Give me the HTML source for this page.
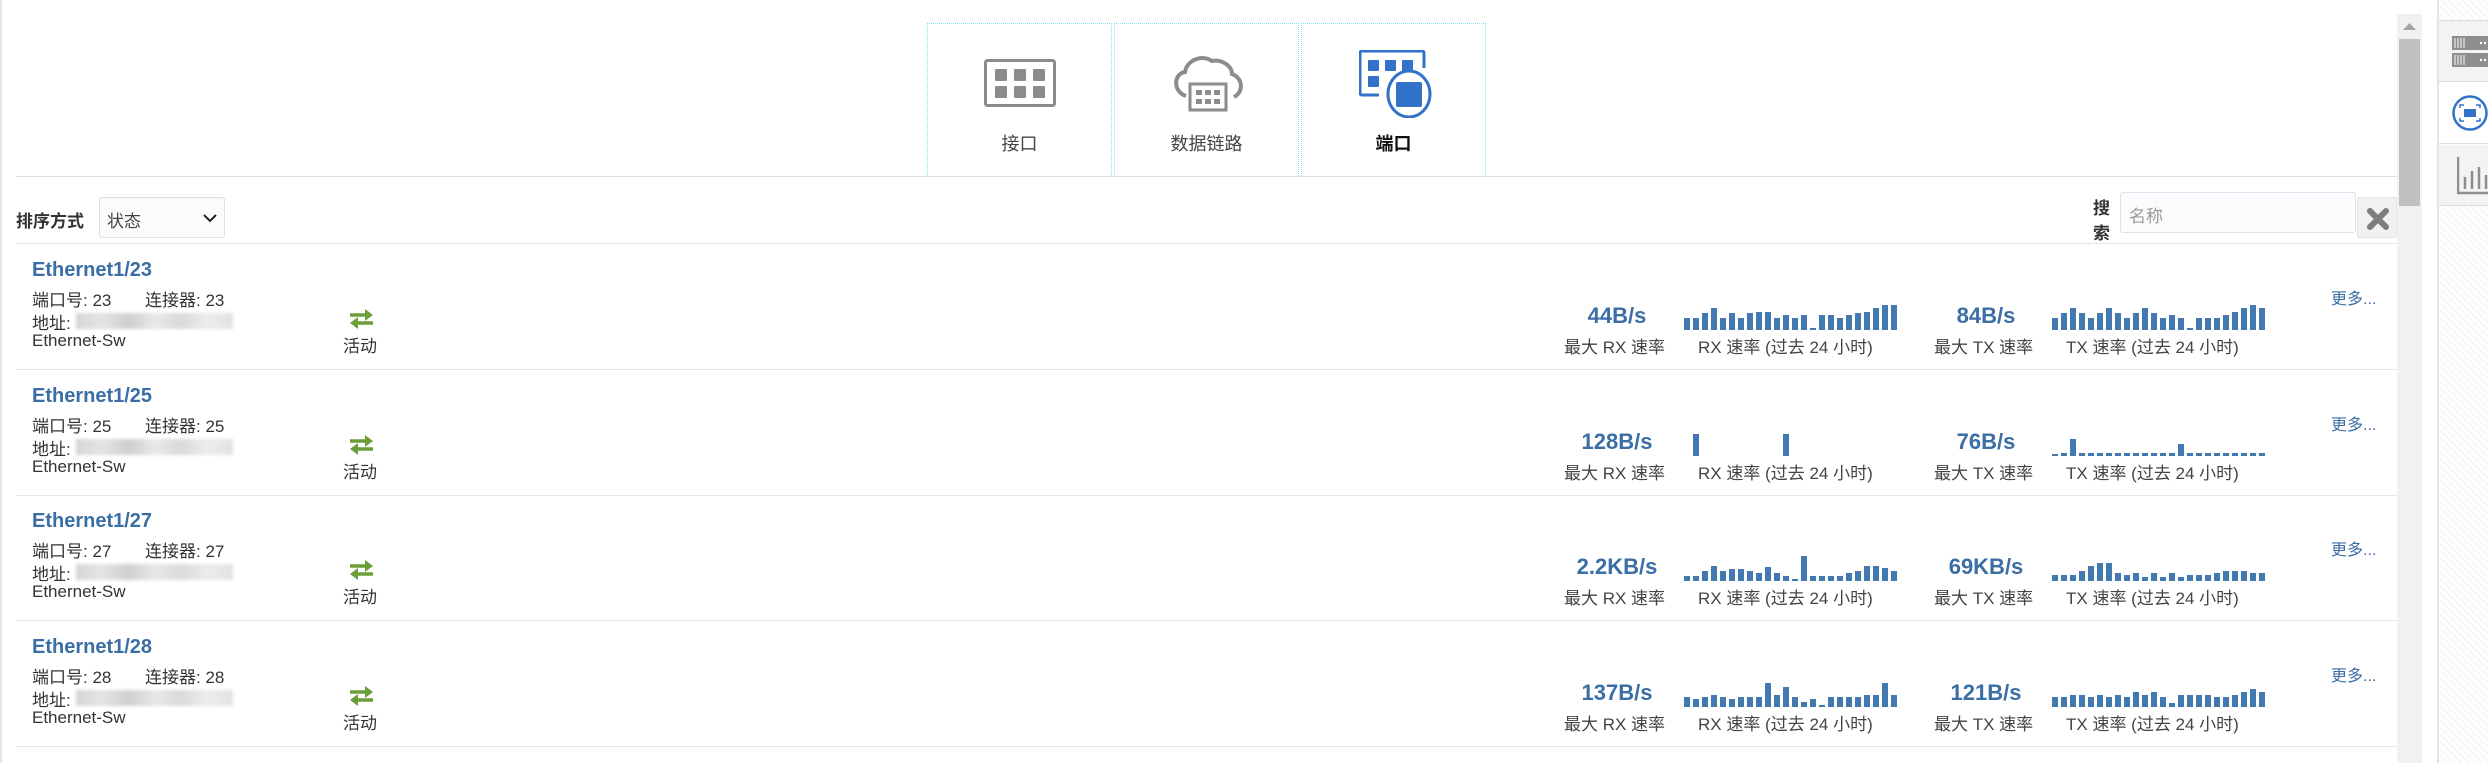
<!DOCTYPE html>
<html><head><meta charset="utf-8"><style>
*{margin:0;padding:0;box-sizing:border-box}
body{width:2488px;height:763px;overflow:hidden;background:#fff;font-family:"Liberation Sans","Noto Sans CJK SC",sans-serif;color:#333;position:relative}
.a{position:absolute;white-space:nowrap}
.tab{position:absolute;top:23px;height:153px;width:185px;border:1px dotted #7fe3ea;border-bottom:none}
.tl{position:absolute;left:0;right:0;top:106px;text-align:center;font-size:18px;color:#444}
.hl{position:absolute;height:1px;background:#e3e6ea}
.title{font-size:20px;font-weight:bold;color:#3a6ea5}
.d{font-size:17px;color:#333}
.val{font-size:22px;font-weight:bold;color:#3a6ea5;text-align:center;width:120px}
.lab{font-size:17px;color:#444}
.more{font-size:16px;color:#3a6ea5}
.blur{position:absolute;height:16px;background:linear-gradient(90deg,#d6d6d6,#e4e4e4,#cfcfcf,#e8e8e8,#dadada,#ececec,#e2e2e2);filter:blur(1.5px)}
.hatch{background:repeating-linear-gradient(45deg,#f7f7f7 0 2px,#fff 2px 5px)}
</style></head><body>
<div class="a" style="left:0;top:0;width:2px;height:763px;background:#dfe5ec"></div>

<!-- tabs -->
<div class="tab" style="left:927px">
 <svg class="a" style="left:56px;top:35px" width="72" height="48" viewBox="0 0 72 48"><rect x="1.5" y="1.5" width="69" height="45" rx="2" fill="none" stroke="#8a8c8e" stroke-width="3"/><g fill="#8a8c8e"><rect x="11" y="10" width="12" height="12" rx="1"/><rect x="30" y="10" width="12" height="12" rx="1"/><rect x="49" y="10" width="12" height="12" rx="1"/><rect x="11" y="27" width="12" height="12" rx="1"/><rect x="30" y="27" width="12" height="12" rx="1"/><rect x="49" y="27" width="12" height="12" rx="1"/></g></svg>
 <div class="tl">接口</div></div>
<div class="tab" style="left:1114px">
 <svg class="a" style="left:57px;top:30px" width="72" height="58" viewBox="0 0 72 58"><path d="M14 42 C1 38 1 20 13 18 C15 6 30 0 40 7 C50 5 60 12 60 20 C71 24 72 38 62 43" fill="none" stroke="#8a8c8e" stroke-width="4"/><rect x="18" y="30" width="36" height="26" fill="#fff" stroke="#8a8c8e" stroke-width="3"/><g fill="#8a8c8e"><rect x="24" y="36" width="6" height="5"/><rect x="33" y="36" width="6" height="5"/><rect x="42" y="36" width="6" height="5"/><rect x="24" y="45" width="6" height="5"/><rect x="33" y="45" width="6" height="5"/><rect x="42" y="45" width="6" height="5"/></g></svg>
 <div class="tl">数据链路</div></div>
<div class="tab" style="left:1301px">
 <svg class="a" style="left:57px;top:26px" width="74" height="68" viewBox="0 0 74 68"><path d="M20 45 H3 a2 2 0 0 1 -2 -2 V3 a2 2 0 0 1 2 -2 H63 a2 2 0 0 1 2 2 V18" fill="none" stroke="#3272c8" stroke-width="3"/><g fill="#3272c8"><rect x="9" y="10" width="11" height="11" rx="1"/><rect x="26" y="10" width="11" height="11" rx="1"/><rect x="43" y="10" width="11" height="11" rx="1"/><rect x="9" y="26" width="11" height="11" rx="1"/></g><ellipse cx="50" cy="44" rx="21" ry="23" fill="#fff" stroke="#3272c8" stroke-width="3"/><rect x="37" y="32" width="26" height="25" rx="2" fill="#3272c8"/></svg>
 <div class="tl" style="font-weight:bold;color:#111">端口</div></div>
<div class="hl" style="left:16px;width:2381px;top:176px;background:#d8dfe7"></div>

<!-- sort row -->
<div class="a" style="left:16px;top:207px;font-size:17px;font-weight:bold;color:#333">排序方式</div>
<div class="a" style="left:99px;top:197px;width:126px;height:41px;border:1px solid #dcdfe3;border-radius:3px;background:#fafbfc"><span class="a" style="left:7px;top:9px;font-size:17px;color:#444">状态</span>
<svg class="a" style="left:103px;top:16px" width="14" height="9"><path d="M1 1 L7 7 L13 1" fill="none" stroke="#222" stroke-width="2"/></svg></div>
<div class="a" style="left:2093px;top:196px;font-size:17px;font-weight:bold;line-height:25px;white-space:normal;width:20px">搜索</div>
<div class="a" style="left:2120px;top:192px;width:236px;height:41px;border:1px solid #dfe2e6;border-radius:3px;background:#fafbfd"><span class="a" style="left:8px;top:9px;font-size:17px;color:#999">名称</span></div>
<div class="a" style="left:2357px;top:197px;width:40px;height:41px;background:#f1f1f1;border:1px solid #e4e4e4;border-radius:2px"><svg class="a" style="left:8px;top:9px" width="24" height="24"><path d="M4 4 L20 20 M20 4 L4 20" stroke="#7d7d7d" stroke-width="6" stroke-linecap="round"/></svg></div>
<div class="hl" style="left:16px;width:2381px;top:243px"></div>

<!-- scrollbar -->
<div class="a" style="left:2397px;top:14px;width:25px;height:749px;background:#f1f1f1"></div>
<svg class="a" style="left:2403px;top:23px" width="13" height="8"><path d="M0 7 L6.5 0 L13 7Z" fill="#a3a3a3"/></svg>
<div class="a" style="left:2399px;top:39px;width:21px;height:167px;background:#c1c1c1"></div>

<!-- right sidebar -->
<div class="a hatch" style="left:2437px;top:0;width:51px;height:763px;border-left:2px solid #e5e5e5"></div>
<div class="a" style="left:2439px;top:20px;width:49px;height:62px;background:#f3f3f3;border-top:1px solid #ddd;border-bottom:1px solid #ddd">
 <svg class="a" style="left:13px;top:15px" width="36" height="32"><rect x="0" y="0" width="36" height="14" fill="#8c8e90"/><rect x="0" y="17" width="36" height="14" fill="#8c8e90"/><g stroke="#fff" stroke-width="1"><path d="M3 2V12M6 2V12M9 2V12M12 2V12M3 19V29M6 19V29M9 19V29M12 19V29"/></g><g fill="#fff"><circle cx="29" cy="7" r="1.2"/><circle cx="33" cy="7" r="1.2"/><circle cx="29" cy="24" r="1.2"/><circle cx="33" cy="24" r="1.2"/></g></svg></div>
<div class="a" style="left:2439px;top:83px;width:49px;height:61px;background:#fff;border-bottom:1px solid #ddd">
 <svg class="a" style="left:13px;top:12px" width="38" height="38"><circle cx="18" cy="18" r="16.5" fill="none" stroke="#3272c8" stroke-width="2.5"/><path d="M8 13V10H12M24 10H28V13M28 23V26H24M12 26H8V23" fill="none" stroke="#3272c8" stroke-width="1.5"/><rect x="12" y="14" width="12" height="8" fill="#3272c8"/></svg></div>
<div class="a" style="left:2439px;top:145px;width:49px;height:61px;background:#f3f3f3;border-bottom:1px solid #ddd">
 <svg class="a" style="left:18px;top:12px" width="32" height="38"><path d="M1 0V36H31" fill="none" stroke="#8c8e90" stroke-width="2.5"/><path d="M8 32V20M15 32V14M22 32V10M29 32V18" stroke="#8c8e90" stroke-width="2.5"/></svg></div>

<div id="rows"></div>
<script>
const rows=[
["23","44B/s","84B/s",[12,12,17,22,12,17,12,17,18,18,12,15,12,15,2,15,15,12,15,17,18,22,25,25],[12,17,22,17,12,17,22,17,12,17,22,17,12,15,12,2,12,12,12,15,18,22,25,22]],
["25","128B/s","76B/s",[0,22,0,0,0,0,0,0,0,0,0,22,0,0,0,0,0,0,0,0,0,0,0,0],[2,3,17,3,3,3,3,3,3,3,3,3,3,3,12,3,3,3,3,3,3,3,3,3]],
["27","2.2KB/s","69KB/s",[5,5,10,15,10,12,12,10,8,14,8,5,2,25,5,5,5,5,8,10,15,15,13,10],[6,6,6,10,15,18,18,8,6,8,4,8,4,8,4,6,6,6,8,10,10,10,8,8]],
["28","137B/s","121B/s",[10,8,10,12,10,8,10,10,10,24,12,20,10,5,8,2,10,10,10,10,12,12,24,12],[10,10,12,12,10,12,10,12,10,15,12,15,10,4,12,12,12,12,10,10,12,15,18,15]]];
function bars(h,x,y){let s=`<svg class="a" style="left:${x}px;top:${y-26}px" width="216" height="26">`;h.forEach((v,i)=>{if(v>0)s+=`<rect x="${i*9}" y="${26-v}" width="6" height="${v}" fill="#4179b0"/>`});return s+'</svg>';}
let html='';
rows.forEach((r,i)=>{const t=243+i*125.5;
html+=`<div class="a title" style="left:32px;top:${t+16}px">Ethernet1/${r[0]}</div>
<div class="a d" style="left:32px;top:${t+43}px">端口号: ${r[0]}</div>
<div class="a d" style="left:145px;top:${t+43}px">连接器: ${r[0]}</div>
<div class="a d" style="left:32px;top:${t+66}px">地址:</div>
<div class="blur" style="left:76px;top:${t+70}px;width:157px"></div>
<div class="a d" style="left:32px;top:${t+88}px">Ethernet-Sw</div>
<svg class="a" style="left:349px;top:${t+66}px" width="25" height="20"><path d="M1 6H17" stroke="#6a9e3a" stroke-width="3.5"/><path d="M16 0L24 6L16 12Z" fill="#6a9e3a"/><path d="M8 14H24" stroke="#6a9e3a" stroke-width="3.5"/><path d="M9 8L1 14L9 20Z" fill="#6a9e3a"/></svg>
<div class="a d" style="left:343px;top:${t+89}px">活动</div>
<div class="a val" style="left:1557px;top:${t+60}px">${r[1]}</div>
<div class="a lab" style="left:1564px;top:${t+90}px">最大 RX 速率</div>
${bars(r[3],1684,t+87)}
<div class="a lab" style="left:1698px;top:${t+90}px">RX 速率 (过去 24 小时)</div>
<div class="a val" style="left:1926px;top:${t+60}px">${r[2]}</div>
<div class="a lab" style="left:1934px;top:${t+90}px">最大 TX 速率</div>
${bars(r[4],2052,t+87)}
<div class="a lab" style="left:2066px;top:${t+90}px">TX 速率 (过去 24 小时)</div>
<div class="a more" style="left:2331px;top:${t+42}px">更多...</div>
<div class="hl" style="left:16px;width:2381px;top:${Math.round(t+126)}px"></div>`;});
document.getElementById('rows').innerHTML=html;
</script>
</body></html>
